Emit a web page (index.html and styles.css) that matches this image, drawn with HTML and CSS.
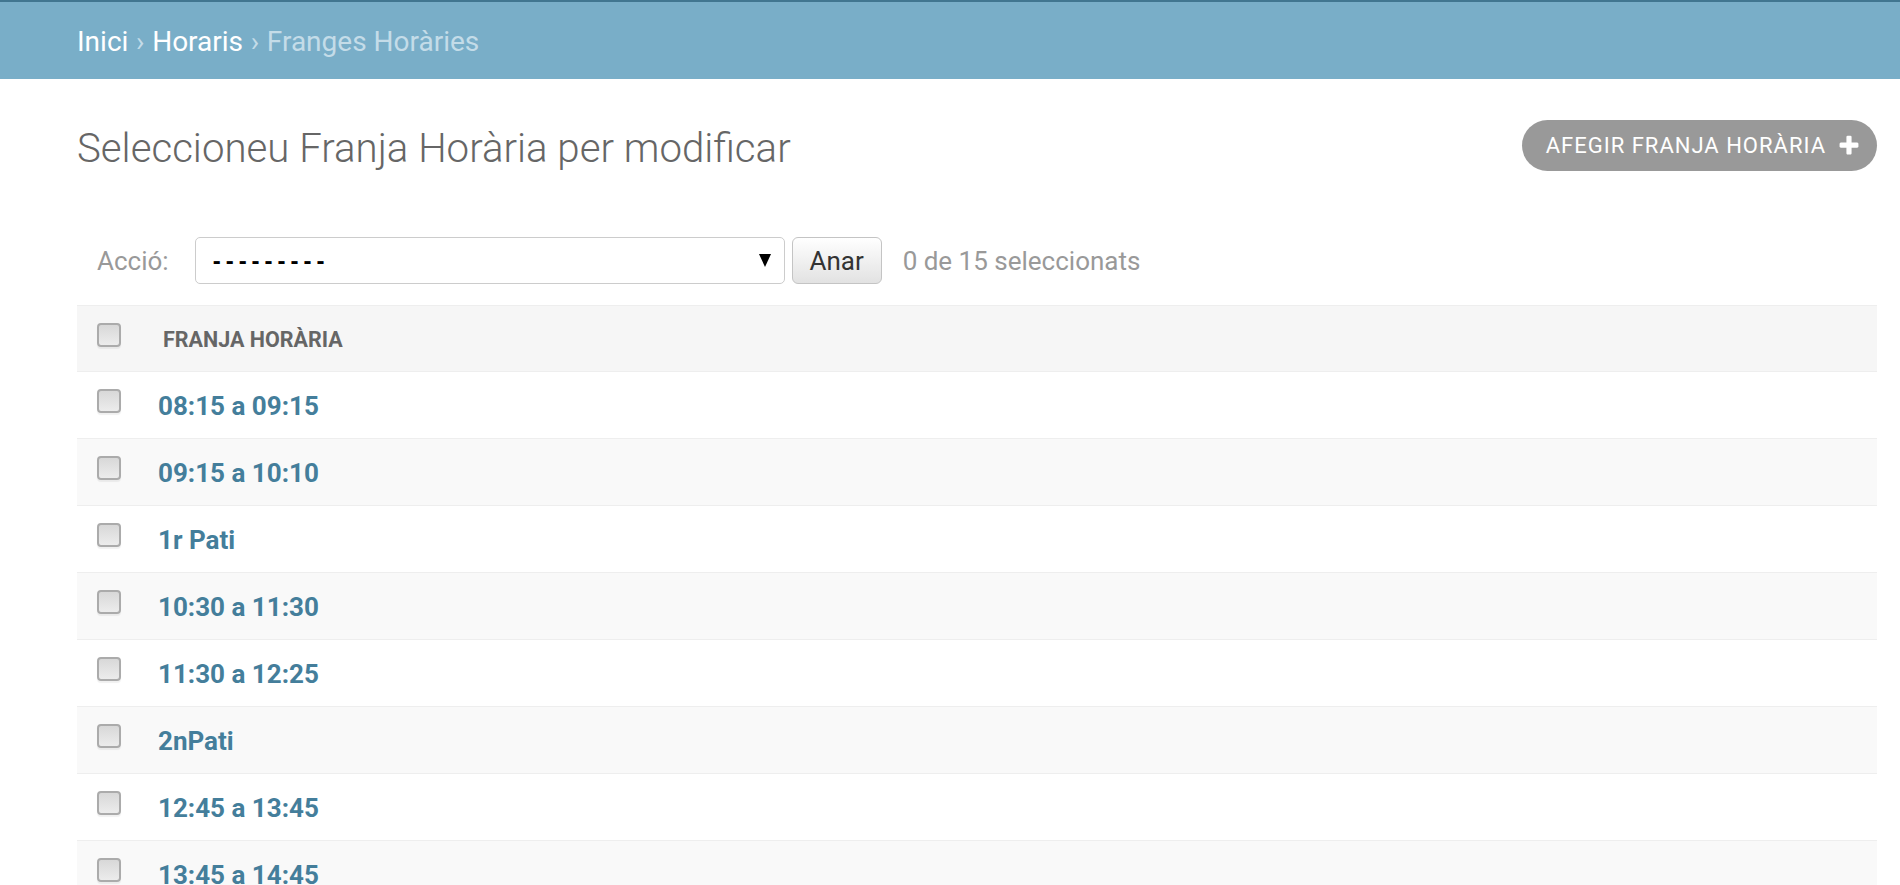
FILE: index.html
```html
<!DOCTYPE html>
<html lang="ca">
<head>
<meta charset="utf-8">
<title>Seleccioneu Franja Horària per modificar</title>
<link rel="stylesheet" href="styles.css">
</head>
<body>
<div class="breadcrumbs">
  <a href="#">Inici</a><span class="sep">›</span><a href="#">Horaris</a><span class="sep">›</span><span class="current">Franges Horàries</span>
</div>
<div class="content">
  <div class="title-row">
    <h1>Seleccioneu Franja Horària per modificar</h1>
    <a class="addlink" href="#">Afegir Franja Horària
      <svg class="plus" width="24" height="24" viewBox="0 0 1792 1792"><path fill="#fff" d="M1600 736v192q0 40-28 68t-68 28h-416v416q0 40-28 68t-68 28h-192q-40 0-68-28t-28-68v-416h-416q-40 0-68-28t-28-68v-192q0-40 28-68t68-28h416v-416q0-40 28-68t68-28h192q40 0 68 28t28 68v416h416q40 0 68 28t28 68z"/></svg>
    </a>
  </div>
  <div class="actions">
    <span class="action-label">Acció:</span>
    <div class="select"><span class="select-value">---------</span>
      <svg class="arrow" width="12" height="13" viewBox="0 0 12 13"><path d="M0 0H12L6 13Z" fill="#000"/></svg>
    </div>
    <button class="go" type="button">Anar</button>
    <span class="counter">0 de 15 seleccionats</span>
  </div>
  <table class="result-list">
    <thead>
      <tr><th class="cb-cell"><span class="cb"></span></th><th class="col-head">Franja Horària</th></tr>
    </thead>
    <tbody>
      <tr><td class="cb-cell"><span class="cb"></span></td><td><a href="#">08:15 a 09:15</a></td></tr>
      <tr class="alt"><td class="cb-cell"><span class="cb"></span></td><td><a href="#">09:15 a 10:10</a></td></tr>
      <tr><td class="cb-cell"><span class="cb"></span></td><td><a href="#">1r Pati</a></td></tr>
      <tr class="alt"><td class="cb-cell"><span class="cb"></span></td><td><a href="#">10:30 a 11:30</a></td></tr>
      <tr><td class="cb-cell"><span class="cb"></span></td><td><a href="#">11:30 a 12:25</a></td></tr>
      <tr class="alt"><td class="cb-cell"><span class="cb"></span></td><td><a href="#">2nPati</a></td></tr>
      <tr><td class="cb-cell"><span class="cb"></span></td><td><a href="#">12:45 a 13:45</a></td></tr>
      <tr class="alt"><td class="cb-cell"><span class="cb"></span></td><td><a href="#">13:45 a 14:45</a></td></tr>
    </tbody>
  </table>
</div>
</body>
</html>
```
FILE: styles.css
```css
html, body {
  margin: 0;
  padding: 0;
  overflow: hidden;
  background: #fff;
}
body {
  font-family: Roboto, "Liberation Sans", sans-serif;
  color: #333;
}
a { text-decoration: none; }

.breadcrumbs {
  box-sizing: border-box;
  height: 79px;
  border-top: 2px solid #417690;
  background: #79aec8;
  display: flex;
  align-items: center;
  padding: 2px 0 0 77px;
  font-size: 28px;
  color: #c4dce8;
}
.breadcrumbs a { color: #fff; }
.breadcrumbs .sep { margin: 0 7.7px; }

.content {
  padding: 0 23px 0 77px;
}

.title-row {
  margin-top: 41px;
  height: 51px;
  display: flex;
  align-items: center;
  justify-content: space-between;
}
.title-row h1 {
  margin: 0;
  padding-top: 5px;
  font-size: 40.2px;
  font-weight: 300;
  color: #666;
  line-height: 51px;
}
.addlink {
  box-sizing: border-box;
  height: 51px;
  display: flex;
  align-items: center;
  padding: 0 16px 0 24px;
  background: #999;
  border-radius: 26px;
  color: #fff;
  font-size: 22px;
  letter-spacing: 1px;
  text-transform: uppercase;
}
.addlink .plus { margin-left: 11px; }

.actions {
  margin-top: 66px;
  height: 47px;
  display: flex;
  align-items: center;
  padding-left: 20px;
}
.action-label {
  font-size: 26px;
  color: #999;
  margin-right: 26px;
}
.select {
  box-sizing: border-box;
  width: 590px;
  height: 47px;
  border: 1px solid #ccc;
  border-radius: 5px;
  display: flex;
  align-items: center;
  justify-content: space-between;
  padding: 0 13px 0 17px;
  background: #fff;
}
.select-value {
  font-family: "Liberation Sans", Arial, sans-serif;
  font-size: 24px;
  letter-spacing: 5px;
  color: #000;
  font-weight: bold;
}
.go {
  box-sizing: border-box;
  margin-left: 7px;
  width: 90px;
  height: 47px;
  border: 1px solid #c4c4c4;
  border-radius: 6px;
  background: linear-gradient(#ffffff, #e2e2e2);
  font-family: Roboto, "Liberation Sans", sans-serif;
  font-size: 26px;
  color: #333;
  padding: 0;
}
.counter {
  margin-left: 21px;
  font-size: 26px;
  color: #999;
}

.result-list {
  margin-top: 21px;
  width: 100%;
  border-collapse: separate;
  border-spacing: 0;
}
.result-list th,
.result-list td {
  box-sizing: border-box;
  height: 67px;
  padding: 2px 0 0 11px;
  border-bottom: 1px solid #eee;
  vertical-align: middle;
  text-align: left;
}
.result-list thead th {
  background: #f6f6f6;
  border-top: 1px solid #eee;
  height: 67px;
}
.result-list tbody tr td { background: #fff; }
.result-list tbody tr.alt td { background: #f9f9f9; }

.result-list .cb-cell {
  width: 70px;
  padding: 17px 0 0 20px;
  vertical-align: top;
}
.result-list thead .cb-cell { padding-top: 17px; }

.cb {
  display: block;
  box-sizing: border-box;
  width: 24px;
  height: 24px;
  border: 2px solid #ababab;
  border-radius: 4px;
  background: linear-gradient(#d8d8d8, #ececec);
  box-shadow: 0 2px 1px rgba(0,0,0,0.06);
}

.col-head {
  font-size: 21.5px;
  font-weight: bold;
  color: #666;
  text-transform: uppercase;
}
.result-list thead th.col-head { padding-left: 16px; }

.result-list td a {
  font-size: 26px;
  font-weight: bold;
  color: #447e9b;
}
```
